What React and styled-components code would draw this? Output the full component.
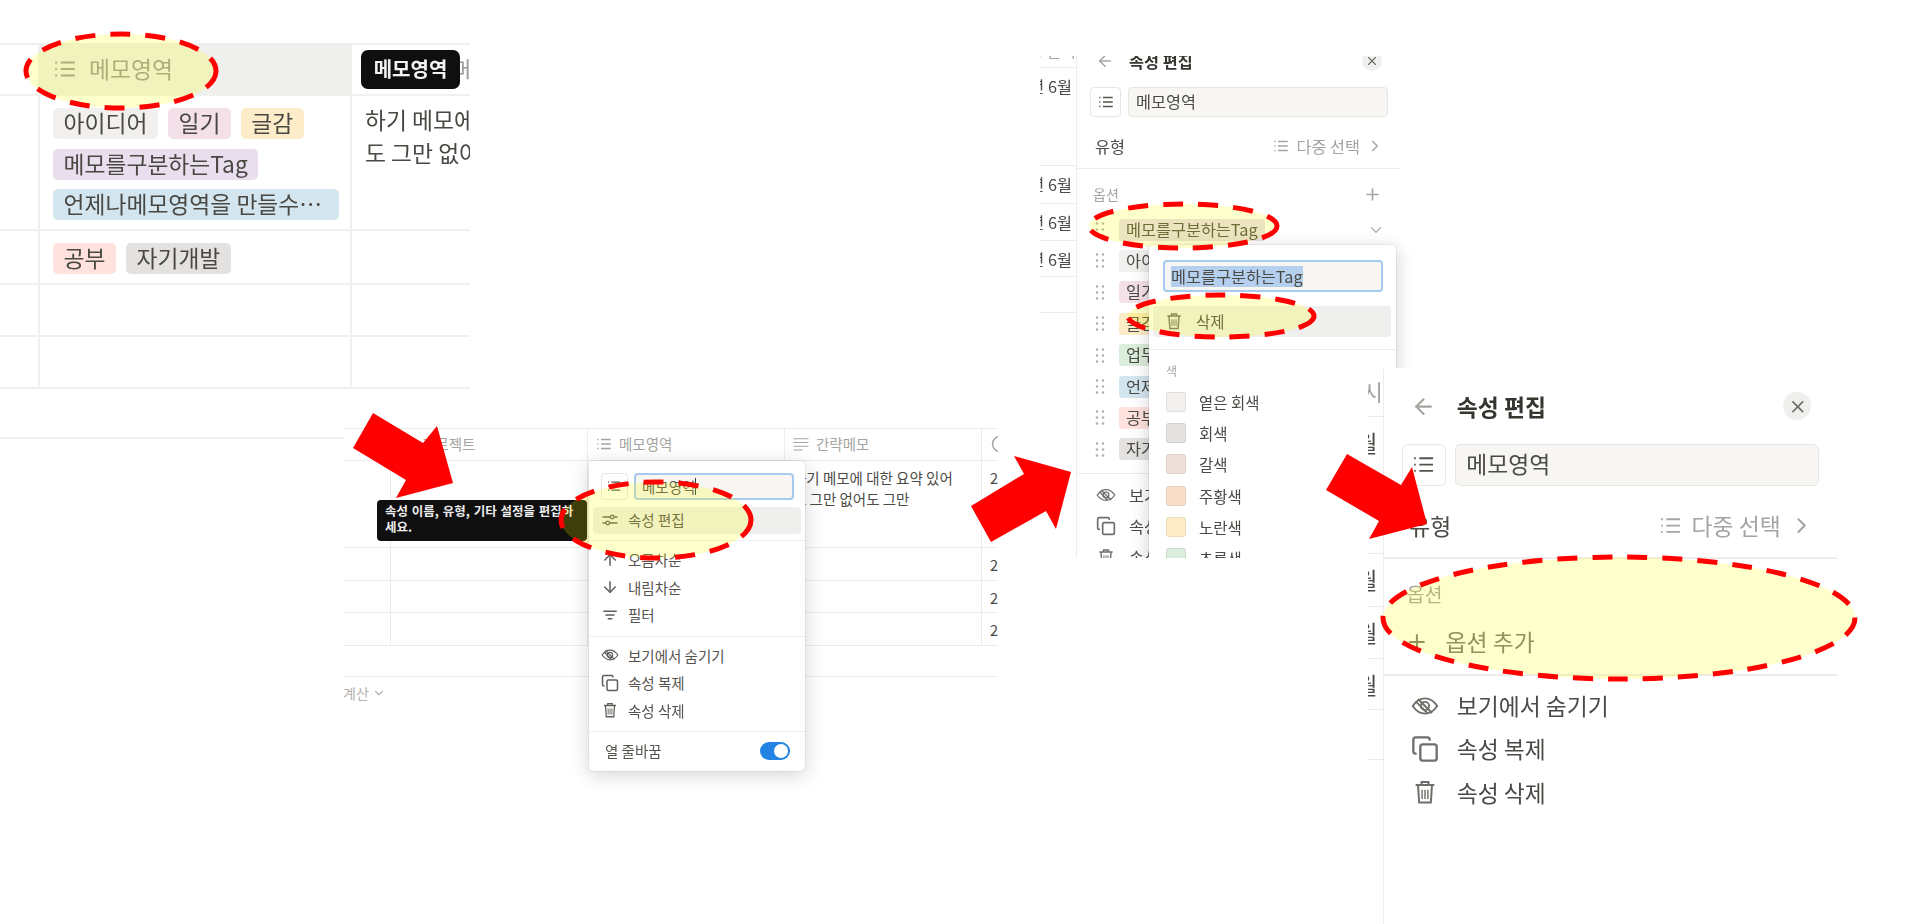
import styled, { createGlobalStyle } from "styled-components";
import {
  ArrowDown,
  ArrowLeft,
  ArrowUp,
  ChevronDown,
  ChevronRight,
  Clock,
  Copy,
  Plus,
  X,
} from "lucide-react";

//style
const GlobalStyle = createGlobalStyle`
  html, body {
    margin: 0;
    background: #fff;
    overflow: hidden;
    font-family: "Noto Sans CJK KR", "Noto Sans", sans-serif;
    color: #37352f;
  }
  * {
    box-sizing: border-box;
  }
`;

// panels C and D are the same screenshot at two zoom levels
const u = (n) => `calc(${n} * var(--u))`;

const Canvas = styled.main`
  position: relative;
  width: 1907px;
  height: 924px;
  overflow: hidden;
  background: #fff;
`;

// the pasted screenshots are soft from being rescaled
const Shot = styled.section`
  position: absolute;
  left: ${(p) => p.$x}px;
  top: ${(p) => p.$y}px;
  width: ${(p) => p.$w}px;
  height: ${(p) => p.$h}px;
  background: #fff;
  overflow: ${(p) => (p.$clip ? "hidden" : "visible")};
  filter: blur(0.35px);
  --u: ${(p) => p.$u || 1}px;
`;

const Annotations = styled.svg`
  position: absolute;
  inset: 0;
  width: 1907px;
  height: 924px;
  pointer-events: none;
`;

//big table
const BigRow = styled.div`
  display: flex;
  height: ${(p) => p.$h}px;
  border-bottom: 2px solid #f0f0ee;
  border-top: ${(p) => (p.$top ? "2px solid #efefed" : "none")};
`;

const BigCell = styled.div`
  flex: none;
  width: ${(p) => p.$w}px;
  border-right: ${(p) => (p.$last ? "none" : "2px solid #f0f0ee")};
  background: ${(p) => p.$bg || "transparent"};
  overflow: hidden;
`;

const BigHead = styled(BigCell)`
  display: flex;
  align-items: center;
  gap: ${(p) => p.$gap}px;
  padding: 0 0 2px 12px;
  font-size: 22.8px;
  color: #9b9a97;
  white-space: nowrap;
  svg {
    flex: none;
    width: 26px;
    height: 26px;
  }
`;

const TagWrap = styled.div`
  display: flex;
  flex-wrap: wrap;
  gap: 9.5px 10px;
  padding: 12px 11px 12px 13px;
`;

const BigTag = styled.span`
  display: block;
  max-width: 100%;
  height: 31px;
  padding: 0 10.5px;
  border-radius: 5px;
  background: ${(p) => p.$bg};
  font-size: 22.8px;
  line-height: 30px;
  color: #4a4843;
  white-space: nowrap;
  overflow: hidden;
  text-overflow: ellipsis;
`;

const BigNote = styled.p`
  margin: 0;
  padding: 7px 0 0 13px;
  width: 320px;
  font-size: 22.8px;
  line-height: 33px;
  color: #4a4843;
`;

const HeadTip = styled.div`
  position: absolute;
  left: 361px;
  top: 7px;
  width: 99px;
  height: 39px;
  border-radius: 7px;
  background: #0f0f0f;
  color: #f2f2f2;
  font-size: 20px;
  font-weight: 700;
  line-height: 37px;
  text-align: center;
`;

//small table
const SmallRow = styled.div`
  display: flex;
  height: ${(p) => p.$h}px;
  border-bottom: 1px solid #ececea;
  border-top: ${(p) => (p.$top ? "1px solid #ececea" : "none")};
`;

const SmallCell = styled.div`
  flex: none;
  width: ${(p) => p.$w}px;
  border-right: ${(p) => (p.$last ? "none" : "1px solid #ececea")};
  padding: 6px 0 0 8px;
  font-size: 14.5px;
  line-height: 21px;
  white-space: nowrap;
  overflow: hidden;
  color: #4b4a46;
`;

const SmallHead = styled(SmallCell)`
  display: flex;
  align-items: center;
  gap: 6px;
  padding: 0 0 2px ${(p) => p.$pad || 8}px;
  color: #a5a4a0;
  svg {
    flex: none;
    width: 18px;
    height: 18px;
  }
`;

const Sum = styled.div`
  display: flex;
  align-items: center;
  gap: 3px;
  height: 32px;
  font-size: 14px;
  color: #b3b2ae;
`;

const ColumnMenu = styled.div`
  position: absolute;
  left: 246px;
  top: 33px;
  width: 216px;
  height: 310px;
  border-radius: 5px;
  background: #fff;
  box-shadow: 0 0 0 1px rgba(15, 15, 15, 0.05), 0 4px 20px rgba(15, 15, 15, 0.18);
  font-size: 14.5px;
  color: #55534e;
  padding-top: 12px;
`;

const MenuField = styled.div`
  display: flex;
  gap: 6px;
  padding-left: 12px;
`;

const IconBox = styled.div`
  display: flex;
  align-items: center;
  justify-content: center;
  flex: none;
  width: ${(p) => p.$w}px;
  height: ${(p) => p.$h}px;
  border: 1px solid #e6e6e4;
  border-radius: 4px;
  background: #fff;
  color: #55534e;
  svg {
    width: 65%;
    height: 65%;
  }
`;

const MenuInput = styled.div`
  display: flex;
  align-items: center;
  width: 160px;
  height: 27px;
  padding: 0 0 1px 6px;
  border: 2px solid #a6cbef;
  border-radius: 4px;
  background: #f7f6f3;
  white-space: nowrap;
`;

const TextCaret = styled.i`
  display: block;
  width: 1px;
  height: 17px;
  background: #37352f;
`;

const MenuRow = styled.div`
  display: flex;
  align-items: center;
  gap: 9px;
  height: ${(p) => (p.$active ? 27 : 27.5)}px;
  margin: ${(p) => (p.$active ? "7px 4px 0" : "0 4px")};
  padding: 0 0 2px 8px;
  border-radius: 4px;
  background: ${(p) => (p.$active ? "#efefed" : "transparent")};
  svg {
    flex: none;
    width: 18px;
    height: 18px;
    color: #5f5e5a;
  }
`;

const MenuLine = styled.div`
  height: 1px;
  margin: ${(p) => p.$gap || 6}px 0;
  background: #ededeb;
`;

const WrapRow = styled.div`
  display: flex;
  align-items: center;
  justify-content: space-between;
  height: 34px;
  padding: 0 15px 0 16px;
  margin-top: -4.5px;
`;

const Toggle = styled.span`
  position: relative;
  display: block;
  width: 30px;
  height: 18px;
  border-radius: 9px;
  background: #2383e2;
  &::after {
    content: "";
    position: absolute;
    right: 2px;
    top: 2px;
    width: 14px;
    height: 14px;
    border-radius: 50%;
    background: #fff;
  }
`;

const MenuTip = styled.div`
  position: absolute;
  left: 34px;
  top: 72px;
  width: 210px;
  height: 41px;
  padding: 3px 8px;
  border-radius: 4px;
  background: #0f0f0f;
  color: #ededed;
  font-size: 12.5px;
  font-weight: 700;
  line-height: 16px;
  word-spacing: 1px;
  white-space: nowrap;
`;

//property editor, sized with --u
const Frame = styled.div`
  display: flex;
  min-height: 100%;
  margin-top: ${(p) => p.$crop || 0}px;
  font-size: ${u(16.3)};
  color: #4b4a46;
`;

const Strip = styled.div`
  flex: none;
  width: ${(p) => p.$w}px;
`;

const StripRow = styled.div`
  display: flex;
  justify-content: flex-end;
  height: ${(p) => u(p.$h)};
  padding-right: ${(p) => (p.$head ? 0 : u(4))};
  border-bottom: ${u(1.4)} solid #ececea;
  line-height: ${(p) => (p.$head ? u(34) : u(37))};
  white-space: nowrap;
  overflow: hidden;
  color: ${(p) => (p.$head ? "#a5a4a0" : "#4b4a46")};
`;

const Panel = styled.div`
  position: relative;
  flex: none;
  width: ${u(324)};
  border-left: ${u(1.4)} solid #ececea;
`;

const PanelHead = styled.div`
  display: flex;
  align-items: center;
  gap: ${u(15)};
  height: ${u(28)};
  margin-top: ${u(14)};
  padding: 0 ${u(18)} ${u(1)} ${u(19)};
  font-weight: 700;
  color: #37352f;
  > svg {
    width: ${u(18)};
    height: ${u(18)};
    color: #a5a4a0;
  }
`;

const CloseBtn = styled.span`
  display: flex;
  align-items: center;
  justify-content: center;
  width: ${u(20)};
  height: ${u(20)};
  margin-left: auto;
  border-radius: 50%;
  background: #efefed;
  color: #6f6e6a;
  svg {
    width: ${u(14)};
    height: ${u(14)};
  }
`;

const NameRow = styled.div`
  display: flex;
  gap: ${u(7)};
  margin-top: ${u(12)};
  padding-left: ${u(13)};
`;

const NameBox = styled.div`
  display: flex;
  align-items: center;
  justify-content: center;
  flex: none;
  width: ${u(31)};
  height: ${u(30)};
  border: ${u(1.2)} solid #e6e6e4;
  border-radius: ${u(4)};
  color: #55534e;
  svg {
    width: ${u(18)};
    height: ${u(18)};
  }
`;

const NameInput = styled.div`
  display: flex;
  align-items: center;
  width: ${u(260)};
  height: ${u(30)};
  padding: 0 0 ${u(1.5)} ${u(7)};
  border: ${u(1.2)} solid #e6e6e4;
  border-radius: ${u(4)};
  background: #f7f6f3;
`;

const TypeRow = styled.div`
  display: flex;
  align-items: center;
  height: ${u(30)};
  margin-top: ${u(15)};
  padding: 0 ${u(16)} ${u(3)} ${u(18)};
`;

const TypeValue = styled.div`
  display: flex;
  align-items: center;
  gap: ${u(6)};
  margin-left: auto;
  color: #a5a4a0;
  svg {
    width: ${u(18)};
    height: ${u(18)};
  }
`;

const PanelLine = styled.div`
  height: ${u(1.4)};
  margin-top: ${(p) => u(p.$gap || 0)};
  background: #ededeb;
`;

const OptionHead = styled.div`
  display: flex;
  align-items: center;
  justify-content: space-between;
  height: ${u(20)};
  margin-top: ${u(15)};
  padding: 0 ${u(18)} 0 ${u(16)};
  font-size: ${u(14)};
  color: #a5a4a0;
  svg {
    width: ${u(19)};
    height: ${u(19)};
  }
`;

const OptionList = styled.div`
  margin-top: ${u(9.5)};
`;

const OptionRow = styled.div`
  display: flex;
  align-items: center;
  gap: ${u(14)};
  height: ${u(31.4)};
  padding: 0 ${u(15)} 0 ${u(18)};
  > svg:first-child {
    flex: none;
    width: ${u(10)};
    height: ${u(15)};
  }
  > svg:last-child:not(:first-child) {
    width: ${u(18)};
    height: ${u(18)};
    margin-left: auto;
    color: #b5b4b0;
  }
`;

const OptionTag = styled.span`
  height: ${u(22)};
  padding: 0 ${u(7)};
  border-radius: ${u(3)};
  background: ${(p) => p.$bg};
  line-height: ${u(21)};
  white-space: nowrap;
`;

const AddOption = styled.div`
  display: flex;
  align-items: center;
  gap: ${u(12)};
  height: ${u(30)};
  margin-top: ${u(9)};
  padding-left: ${u(15)};
  color: #787774;
  svg {
    width: ${u(17)};
    height: ${u(17)};
  }
`;

const FootRows = styled.div`
  padding-top: ${u(5.4)};
`;

const FootRow = styled.div`
  display: flex;
  align-items: center;
  gap: ${u(13)};
  height: ${u(31)};
  padding-left: ${u(19)};
  svg {
    flex: none;
    width: ${u(20)};
    height: ${u(20)};
    color: #6f6e6a;
  }
`;

//popup inside panel C
const OptionMenu = styled.div`
  position: absolute;
  left: 72px;
  top: 212px;
  width: 247px;
  height: 340px;
  border-radius: 5px;
  background: #fff;
  box-shadow: 0 0 0 1px rgba(15, 15, 15, 0.05), 0 4px 18px rgba(15, 15, 15, 0.2);
  padding-top: 15px;
  font-size: 15.5px;
`;

const OptionInput = styled.div`
  display: flex;
  align-items: center;
  width: 220px;
  height: 32px;
  margin-left: 14px;
  padding-left: 6px;
  border: 2px solid #a6cbef;
  border-radius: 4px;
  background: #f7f6f3;
  font-size: 16.3px;
  white-space: nowrap;
`;

const Selected = styled.span`
  background: #b4d0ee;
  line-height: 21px;
`;

const DeleteRow = styled.div`
  display: flex;
  align-items: center;
  gap: 12px;
  height: 31px;
  margin: 14px 5px 0 4px;
  padding: 0 0 1px 11px;
  border-radius: 3px;
  background: #efefed;
  svg {
    width: 20px;
    height: 20px;
    color: #6f6e6a;
  }
`;

const ColorLabel = styled.div`
  height: 18px;
  margin: 12px 0 6px;
  padding-left: 17px;
  font-size: 12px;
  line-height: 18px;
  color: #a5a4a0;
`;

const ColorRow = styled.div`
  display: flex;
  align-items: center;
  gap: 13px;
  height: 31.3px;
  padding-left: 17px;
`;

const Swatch = styled.span`
  width: 20px;
  height: 20px;
  border: 1px solid rgba(55, 53, 47, 0.09);
  border-radius: 3px;
  background: ${(p) => p.$bg};
`;

//icons
const ListIcon = () => (
  <svg viewBox="0 0 24 24" fill="none" stroke="currentColor" strokeWidth="1.8">
    <path d="M8 6h13M8 12h13M8 18h13" />
    <path d="M3 6h1.6M3 12h1.6M3 18h1.6" />
  </svg>
);

const TextIcon = () => (
  <svg viewBox="0 0 24 24" fill="none" stroke="currentColor" strokeWidth="1.6">
    <path d="M2 5h20M2 10h20M2 15h20M2 20h12" />
  </svg>
);

const SlidersIcon = () => (
  <svg viewBox="0 0 24 24" fill="none" stroke="currentColor" strokeWidth="1.7">
    <path d="M2 8h20M2 16h20" />
    <circle cx="15" cy="8" r="2.4" fill="#f4f3d8" />
    <circle cx="9" cy="16" r="2.4" fill="#f4f3d8" />
  </svg>
);

const FilterIcon = () => (
  <svg viewBox="0 0 24 24" fill="none" stroke="currentColor" strokeWidth="1.8">
    <path d="M3 7h18M6 12h12M9 17h6" />
  </svg>
);

const EyeHideIcon = () => (
  <svg viewBox="0 0 24 24" fill="none" stroke="currentColor" strokeWidth="1.6">
    <path d="M1.5 12C4.5 7.5 8 5.5 12 5.5s7.5 2 10.5 6.5c-3 4.5-6.5 6.5-10.5 6.5S4.5 16.5 1.5 12z" />
    <circle cx="12" cy="12" r="3.5" />
    <path d="M6 6l12 12M4 8l10 10" />
  </svg>
);

const TrashIcon = () => (
  <svg viewBox="0 0 24 24" fill="none" stroke="currentColor" strokeWidth="1.7">
    <path d="M4 6h16M9 6V3.5h6V6M6 6l1 15h10l1-15" />
    <path d="M9.5 10v8M12 10v8M14.5 10v8" strokeWidth="1.2" />
  </svg>
);

const DragIcon = () => (
  <svg viewBox="0 0 10 15" fill="#b0afab">
    {[1.5, 7.5, 13.5].map((y) => (
      <g key={y}>
        <circle cx="2" cy={y} r="1.3" />
        <circle cx="8" cy={y} r="1.3" />
      </g>
    ))}
  </svg>
);

//data
const stripRows = [
  { h: 35, head: true, text: "생성 일시" },
  { h: 98, text: "2024년 6월" },
  { h: 38, text: "2024년 6월" },
  { h: 37, text: "2024년 6월" },
  { h: 36, text: "2024년 6월" },
  { h: 36, text: "" },
];

const optionTags = [
  { name: "아이디어", bg: "#f1f0ef" },
  { name: "일기", bg: "#f4e0e9" },
  { name: "글감", bg: "#fdecc8" },
  { name: "업무", bg: "#dbeddb" },
  { name: "언제나", bg: "#d3e5ef" },
  { name: "공부", bg: "#ffe2dd" },
  { name: "자기개발", bg: "#e3e2e0" },
];

const colors = [
  { name: "옅은 회색", bg: "#f1f0ef" },
  { name: "회색", bg: "#e3e2e0" },
  { name: "갈색", bg: "#eee0da" },
  { name: "주황색", bg: "#fadec9" },
  { name: "노란색", bg: "#fdecc8" },
  { name: "초록색", bg: "#dbeddb" },
];

const ellipses = [
  { cx: 121, cy: 71, rx: 95, ry: 37 },
  { cx: 656, cy: 520, rx: 95, ry: 38 },
  { cx: 1183, cy: 226, rx: 94, ry: 22 },
  { cx: 1221, cy: 316, rx: 93, ry: 21 },
  { cx: 1619, cy: 618, rx: 236, ry: 61 },
];

const arrows = [
  "373,413 423,443 437,426 453,483 396,498 406,480 353,448",
  "1014,456 1071,472 1056,529 1046,511 991,542 971,506 1024,474",
  "1347,454 1401,485 1412,467 1427,524 1369,539 1379,521 1326,490",
];

//screens
const BigTable = () => (
  <Shot $x={0} $y={43} $w={470} $h={396} $clip>
    <BigRow $h={53} $top>
      <BigCell $w={40} />
      <BigHead $w={312} $bg="#efefed" $gap={11}>
        <ListIcon />
        메모영역
      </BigHead>
      <BigHead $w={118} $gap={22} $last>
        <TextIcon />
        간략메모
      </BigHead>
    </BigRow>
    <BigRow $h={135}>
      <BigCell $w={40} />
      <BigCell $w={312}>
        <TagWrap>
          <BigTag $bg="#f1f0ef">아이디어</BigTag>
          <BigTag $bg="#f4e0e9">일기</BigTag>
          <BigTag $bg="#fdecc8">글감</BigTag>
          <BigTag $bg="#e8deee">메모를구분하는Tag</BigTag>
          <BigTag $bg="#d3e5ef">언제나메모영역을 만들수있습니다</BigTag>
        </TagWrap>
      </BigCell>
      <BigCell $w={118} $last>
        <BigNote>
          하기 메모에 대한 요약 있어
          <br />도 그만 없어도 그만
        </BigNote>
      </BigCell>
    </BigRow>
    <BigRow $h={54}>
      <BigCell $w={40} />
      <BigCell $w={312}>
        <TagWrap>
          <BigTag $bg="#ffe2dd">공부</BigTag>
          <BigTag $bg="#e3e2e0">자기개발</BigTag>
        </TagWrap>
      </BigCell>
      <BigCell $w={118} $last />
    </BigRow>
    <BigRow $h={52}>
      <BigCell $w={40} />
      <BigCell $w={312} />
      <BigCell $w={118} $last />
    </BigRow>
    <BigRow $h={52}>
      <BigCell $w={40} />
      <BigCell $w={312} />
      <BigCell $w={118} $last />
    </BigRow>
    <BigRow $h={50} />
    <HeadTip>메모영역</HeadTip>
  </Shot>
);

const SmallTable = () => (
  <Shot $x={343} $y={428} $w={655} $h={300}>
    <SmallRow $h={33} $top>
      <SmallHead $w={245} $pad={79}>
        프로젝트
      </SmallHead>
      <SmallHead $w={197} $pad={7}>
        <ListIcon />
        메모영역
      </SmallHead>
      <SmallHead $w={197} $pad={7}>
        <TextIcon />
        간략메모
      </SmallHead>
      <SmallHead $w={16} $pad={9} $last>
        <Clock />
      </SmallHead>
    </SmallRow>
    <SmallRow $h={87}>
      <SmallCell $w={48} />
      <SmallCell $w={197} />
      <SmallCell $w={197} />
      <SmallCell $w={197}>
        하기 메모에 대한 요약 있어
        <br />도 그만 없어도 그만
      </SmallCell>
      <SmallCell $w={16} $last>
        2024
      </SmallCell>
    </SmallRow>
    {[33, 32, 33].map((h, i) => (
      <SmallRow $h={h} key={i}>
        <SmallCell $w={48} />
        <SmallCell $w={197} />
        <SmallCell $w={197} />
        <SmallCell $w={197} />
        <SmallCell $w={16} $last>
          2024
        </SmallCell>
      </SmallRow>
    ))}
    <SmallRow $h={31} />
    <Sum>
      계산 <ChevronDown size={14} />
    </Sum>
    <MenuTip>
      속성 이름, 유형, 기타 설정을 편집하
      <br />
      세요.
    </MenuTip>
    <ColumnMenu>
      <MenuField>
        <IconBox $w={27} $h={27}>
          <ListIcon />
        </IconBox>
        <MenuInput>
          메모영역
          <TextCaret />
        </MenuInput>
      </MenuField>
      <MenuRow $active>
        <SlidersIcon />
        속성 편집
      </MenuRow>
      <MenuLine />
      <MenuRow>
        <ArrowUp />
        오름차순
      </MenuRow>
      <MenuRow>
        <ArrowDown />
        내림차순
      </MenuRow>
      <MenuRow>
        <FilterIcon />
        필터
      </MenuRow>
      <MenuLine />
      <MenuRow>
        <EyeHideIcon />
        보기에서 숨기기
      </MenuRow>
      <MenuRow>
        <Copy />
        속성 복제
      </MenuRow>
      <MenuRow>
        <TrashIcon />
        속성 삭제
      </MenuRow>
      <MenuLine />
      <WrapRow>
        열 줄바꿈
        <Toggle />
      </WrapRow>
    </ColumnMenu>
  </Shot>
);

const PropertyPanel = ({ children }) => (
  <Panel>
    <PanelHead>
      <ArrowLeft />
      속성 편집
      <CloseBtn>
        <X />
      </CloseBtn>
    </PanelHead>
    <NameRow>
      <NameBox>
        <ListIcon />
      </NameBox>
      <NameInput>메모영역</NameInput>
    </NameRow>
    <TypeRow>
      유형
      <TypeValue>
        <ListIcon />
        다중 선택
        <ChevronRight />
      </TypeValue>
    </TypeRow>
    <PanelLine $gap={6} />
    {children}
    <FootRows>
      <FootRow>
        <EyeHideIcon />
        보기에서 숨기기
      </FootRow>
      <FootRow>
        <Copy />
        속성 복제
      </FootRow>
      <FootRow>
        <TrashIcon />
        속성 삭제
      </FootRow>
    </FootRows>
  </Panel>
);

const DateStrip = ({ w }) => (
  <Strip $w={w}>
    {stripRows.map((row, i) => (
      <StripRow key={i} $h={row.h} $head={row.head}>
        {row.text}
      </StripRow>
    ))}
  </Strip>
);

const OptionsPanel = () => (
  <Shot $x={1040} $y={56} $w={400} $h={502} $clip>
    <Frame $crop={-23}>
      <DateStrip w={36} />
      <PropertyPanel>
        <OptionHead>
          옵션
          <Plus />
        </OptionHead>
        <OptionList>
          <OptionRow>
            <DragIcon />
            <OptionTag $bg="#e8deee">메모를구분하는Tag</OptionTag>
            <ChevronDown />
          </OptionRow>
          {optionTags.map((tag) => (
            <OptionRow key={tag.name}>
              <DragIcon />
              <OptionTag $bg={tag.bg}>{tag.name}</OptionTag>
            </OptionRow>
          ))}
        </OptionList>
        <PanelLine $gap={7.5} />
        <OptionMenu>
          <OptionInput>
            <Selected>메모를구분하는Tag</Selected>
          </OptionInput>
          <DeleteRow>
            <TrashIcon />
            삭제
          </DeleteRow>
          <MenuLine $gap={12} />
          <ColorLabel>색</ColorLabel>
          {colors.map((color) => (
            <ColorRow key={color.name}>
              <Swatch $bg={color.bg} />
              {color.name}
            </ColorRow>
          ))}
        </OptionMenu>
      </PropertyPanel>
    </Frame>
  </Shot>
);

const EmptyPanel = () => (
  <Shot $x={1368} $y={368} $w={539} $h={556} $u={1.4} $clip>
    <Frame>
      <DateStrip w={15} />
      <PropertyPanel>
        <OptionHead>옵션</OptionHead>
        <AddOption>
          <Plus />
          옵션 추가
        </AddOption>
        <PanelLine $gap={8.5} />
      </PropertyPanel>
    </Frame>
  </Shot>
);

const App = () => {
  return (
    <Canvas>
      <GlobalStyle />
      <BigTable />
      <SmallTable />
      <OptionsPanel />
      <EmptyPanel />
      <Annotations viewBox="0 0 1907 924">
        {ellipses.map((e) => (
          <ellipse
            key={e.cx}
            {...e}
            fill="#ffff00"
            fillOpacity="0.2"
            stroke="#ff0000"
            strokeWidth="5"
            strokeDasharray="20 15"
          />
        ))}
        {arrows.map((points) => (
          <polygon key={points} points={points} fill="#ff0000" />
        ))}
      </Annotations>
    </Canvas>
  );
};

export default App;
